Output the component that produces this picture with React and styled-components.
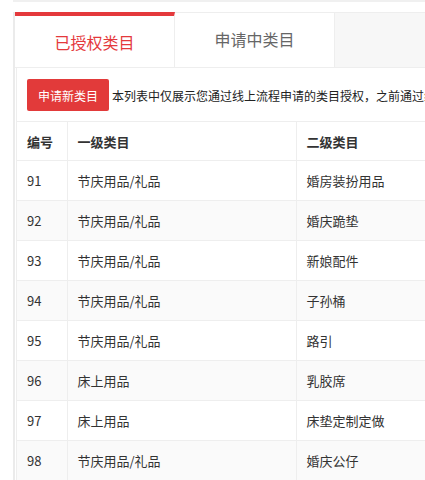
import React, { useState } from 'react'
import styled, { createGlobalStyle } from 'styled-components'

const GlobalStyle = createGlobalStyle`
  html, body {
    margin: 0;
    padding: 0;
    background: #fff;
    overflow: hidden;
  }
  body {
    font-family: "Noto Sans CJK SC", "Noto Sans", sans-serif;
    color: #333;
  }
`;

const rows = [
  { id: 91, first: '节庆用品/礼品', second: '婚房装扮用品' },
  { id: 92, first: '节庆用品/礼品', second: '婚庆跪垫' },
  { id: 93, first: '节庆用品/礼品', second: '新娘配件' },
  { id: 94, first: '节庆用品/礼品', second: '子孙桶' },
  { id: 95, first: '节庆用品/礼品', second: '路引' },
  { id: 96, first: '床上用品', second: '乳胶席' },
  { id: 97, first: '床上用品', second: '床垫定制定做' },
  { id: 98, first: '节庆用品/礼品', second: '婚庆公仔' },
];

const tabs = ['已授权类目', '申请中类目'];

export default function App() {
  const [active, setActive] = useState(0);

  return (
    <Page>
      <GlobalStyle />
      <TopStrip />
      <Main>
        <TabBar>
          {tabs.map((t, i) => (
            <Tab key={t} $active={active === i} onClick={() => setActive(i)}>
              {t}
            </Tab>
          ))}
        </TabBar>
        <Panel>
          <Toolbar>
            <ApplyButton>申请新类目</ApplyButton>
            <Notice>本列表中仅展示您通过线上流程申请的类目授权，之前通过线下流程申请的类目授权请联系客服查询</Notice>
          </Toolbar>
          <Table>
            <thead>
              <tr>
                <HeadCell $w={50}>编号</HeadCell>
                <HeadCell $w={229}>一级类目</HeadCell>
                <HeadCell $w={260}>二级类目</HeadCell>
                <HeadCell>操作</HeadCell>
              </tr>
            </thead>
            <tbody>
              {rows.map((r, i) => (
                <Row key={r.id} $striped={i % 2 === 1}>
                  <Cell>{r.id}</Cell>
                  <Cell>{r.first}</Cell>
                  <Cell>{r.second}</Cell>
                  <Cell>已授权</Cell>
                </Row>
              ))}
            </tbody>
          </Table>
        </Panel>
      </Main>
    </Page>
  )
}

const Page = styled.div`
  width: 900px;
  padding-left: 13px;
`;

const TopStrip = styled.div`
  height: 2px;
  background: #f0f0f0;
  margin-bottom: 10px;
`;

const Main = styled.div`
  border-left: 2px solid #ebebeb;
`;

const TabBar = styled.div`
  display: flex;
  height: 56px;
  background: #f7f7f7;
  border-top: 1px solid #eee;
  border-bottom: 1px solid #eee;
  box-sizing: border-box;
`;

const Tab = styled.div`
  width: 160px;
  display: flex;
  align-items: center;
  justify-content: center;
  box-sizing: border-box;
  background: #fff;
  margin-top: ${p => (p.$active ? '-1px' : '0')};
  border-top: ${p => (p.$active ? '4px solid #e4393c' : 'none')};
  border-right: 1px solid #eee;
  padding-bottom: ${p => (p.$active ? '0' : '3px')};
  font-size: 16px;
  color: ${p => (p.$active ? '#e4393c' : '#666')};
  cursor: pointer;
`;

const Panel = styled.div`
  margin-left: 1px;
  border-left: 1px solid #eee;
  padding-top: 11px;
`;

const Toolbar = styled.div`
  display: flex;
  align-items: center;
  gap: 3px;
  padding-left: 10px;
  margin-bottom: 10px;
`;

const ApplyButton = styled.button`
  flex: none;
  width: 82px;
  height: 32px;
  border: none;
  border-radius: 2px;
  background: #e23a3a;
  color: #fff;
  font-family: inherit;
  font-size: 12px;
  padding: 0;
  cursor: pointer;
`;

const Notice = styled.span`
  font-size: 12px;
  color: #222;
  white-space: nowrap;
`;

const Table = styled.table`
  border-collapse: collapse;
  width: 100%;
  font-size: 13px;
  border-top: 1px solid #eee;
`;

const HeadCell = styled.th`
  width: ${p => (p.$w ? `${p.$w}px` : 'auto')};
  height: 39px;
  padding: 0 0 0 10px;
  text-align: left;
  font-weight: bold;
  color: #333;
  border-right: 1px solid #eee;
  border-bottom: 1px solid #eee;
  box-sizing: border-box;
`;

const Row = styled.tr`
  background: ${p => (p.$striped ? '#fafafa' : '#fff')};
`;

const Cell = styled.td`
  height: 39px;
  padding: 0 0 0 10px;
  color: #333;
  border-right: 1px solid #eee;
  border-bottom: 1px solid #eee;
`;
